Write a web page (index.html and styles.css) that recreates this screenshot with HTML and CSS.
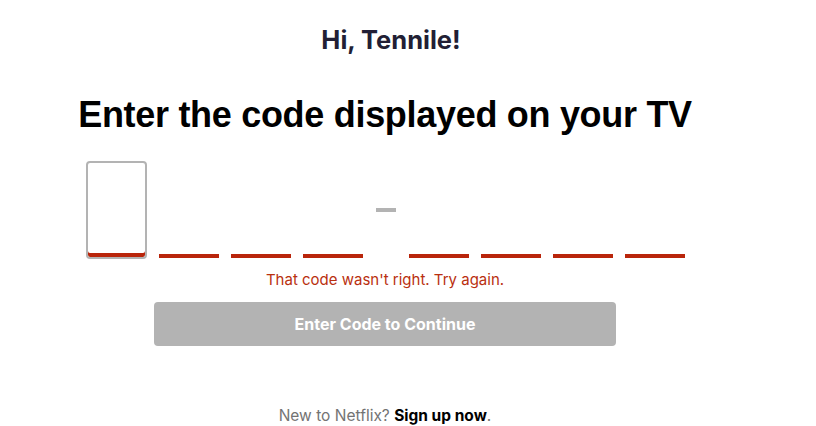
FILE: index.html
```html
<!DOCTYPE html>
<html>
<head>
	<meta charset="utf-8">
	<link rel="stylesheet" href="styles.css">
</head>
<body>
	<div id="pagina">
		<h2 id="salut">Hi, Tennile!</h2>

		<h1 id="titluCod">Enter the code displayed on your TV</h1>

		<div class="codRand">
			<div class="casuta activa"></div>
			<div class="casuta"></div>
			<div class="casuta"></div>
			<div class="casuta"></div>
			<div class="liniuta"></div>
			<div class="casuta"></div>
			<div class="casuta"></div>
			<div class="casuta"></div>
			<div class="casuta"></div>
		</div>

		<p class="eroare">That code wasn't right. Try again.</p>

		<button class="continua" disabled>Enter Code to Continue</button>

		<p class="inscriere">New to Netflix? <a href="#">Sign up now</a>.</p>
	</div>
</body>
</html>
```

FILE: styles.css
```css
body,
html {
	margin: 0;
	padding: 0;
	background-color: #fff;
	font-family: "Inter", "Liberation Sans", sans-serif;
}

#pagina {
	width: 770px;
	display: flex;
	flex-direction: column;
	align-items: center;
	padding-top: 24px;
}

#salut {
	margin: 0 0 0 12px;
	font-size: 25.5px;
	font-weight: 700;
	color: #221f35;
}

#titluCod {
	margin: 39px 0 0 0;
	font-family: "Liberation Sans", Arial, sans-serif;
	font-size: 36px;
	font-weight: 700;
	color: #000;
	letter-spacing: -0.3px;
}

.codRand {
	display: flex;
	align-items: flex-end;
	gap: 12px;
	margin-top: 25px;
}

.casuta {
	width: 60px;
	height: 4px;
	background-color: #b9250b;
}

.casuta.activa {
	box-sizing: border-box;
	width: 61px;
	height: 98px;
	background-color: #fff;
	border: 2px solid #b3b3b3;
	border-radius: 4px;
	box-shadow: inset 0 -4px 0 #b9250b;
	margin-bottom: -1px;
}

.liniuta {
	width: 20px;
	height: 4px;
	background-color: #b3b3b3;
	margin: 0 1px 46px 1px;
}

.eroare {
	margin: 12px 0 0 0;
	font-size: 15px;
	color: #b9300f;
}

.continua {
	margin-top: 13px;
	width: 462px;
	height: 44px;
	border: none;
	border-radius: 4px;
	background-color: #b3b3b3;
	color: #fff;
	font-family: "Inter", "Liberation Sans", sans-serif;
	font-size: 16px;
	font-weight: 700;
}

.inscriere {
	margin: 60px 0 0 0;
	font-size: 15.5px;
	color: #737373;
}

.inscriere a:link,
.inscriere a:visited {
	text-decoration: none;
	color: #000;
	font-weight: 700;
}
```
